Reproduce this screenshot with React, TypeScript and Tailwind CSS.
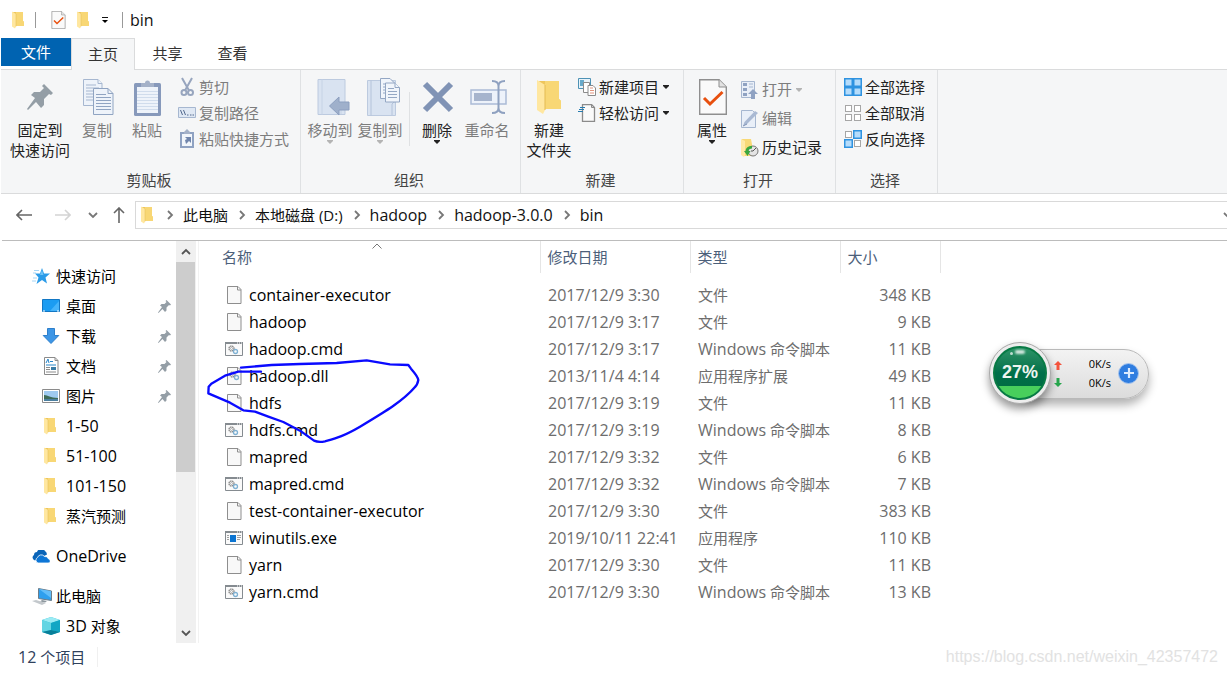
import React from 'react';

type IconProps = { className?: string };

// latin runs are set one pixel larger than the chinese text around them
const Mixed = ({ text }: { text: string }) => (
	<>
		{text.split(/([\x21-\x7e]+)/).map((part, i) =>
			i % 2 ? (
				<span key={i} className="text-base leading-5">
					{part}
				</span>
			) : (
				part
			)
		)}
	</>
);

const Folder = ({ className = 'w-3 h-[18px]' }: IconProps) => (
	<svg viewBox="0 0 24 36" className={`shrink-0 ${className}`}>
		<path d="M2 2h20v18l2 2v8H6z" fill="#eec65c" />
		<path d="M8 2h14v18l2 2v8H8z" fill="#f8d775" />
		<path d="M0 1l8 5v25l-2 4-6-4z" fill="#ffe7a0" />
		<path d="M8 6v25" stroke="#e3bb52" strokeWidth="1" />
	</svg>
);

const Pin = ({ className = 'w-3 h-3' }: IconProps) => (
	<svg viewBox="0 0 26 26" className={`shrink-0 ${className}`} fill="#949ea6">
		<path d="M17 0l9 9-2 2-2-1-5 5v6l-3 3-5-6L1 26l-1-1L8 14 4 11l3-3h6l4-4-2-2z" />
	</svg>
);

const CheckPage = ({ className = 'w-4 h-5' }: IconProps) => (
	<svg viewBox="0 0 28 36" className={`shrink-0 ${className}`}>
		<path d="M.7.7H20l7.300 7.300v27.300H.7z" fill="#fafafa" stroke="#8f8f8f" strokeWidth="1.400" />
		<path d="M20 .7v7.300h7.300" fill="#e2e2e2" stroke="#8f8f8f" />
		<path d="M5 19l6 6L23.500 13" fill="none" stroke="#e8500f" strokeWidth="3" />
	</svg>
);

const CopyPages = ({ className = 'w-[31px] h-9' }: IconProps) => (
	<svg viewBox="0 0 31 36" className={className} fill="#eef3fa" stroke="#a6b7d0">
		<path d="M.5.5H15l4 4v22H.5z" />
		<path d="M15 .5v4h4M3 6h10M3 9h13M3 12h8M3 15h8M3 18h8M3 21h8" />
		<path d="M10.500 9.500H25l5 5v21H10.500z" stroke="#90a4c2" />
		<path d="M25 9.500v5h5M13 15.500h10M13 18.500h15M13 21.500h15M13 24.500h15M13 27.500h15M13 30.500h15" fill="none" stroke="#90a4c2" />
	</svg>
);

const Clipboard = () => (
	<svg viewBox="0 0 27 37" className="w-[27px] h-[37px]">
		<rect y="4" width="27" height="33" rx="1.500" fill="#8799bb" />
		<path d="M3 8h21v26H3z" fill="#eef3fa" />
		<path d="M3 12.500h21M3 15.500h21M3 18.500h21M3 21.500h21M3 24.500h21M3 27.500h21M3 30.500h21" stroke="#d0dcec" />
		<path d="M7 8V4h4a2.500 2.500 0 015 0h4v4z" fill="#a4b1c8" />
	</svg>
);

const Scissors = () => (
	<svg viewBox="0 0 18 20" className="w-[18px] h-5" fill="none" stroke="#97a5be" strokeWidth="2">
		<path d="M4 1l7 12.500M14 1L7 13.500" />
		<circle cx="6" cy="15.500" r="2.500" />
		<circle cx="12.500" cy="15.500" r="2.500" />
	</svg>
);

const PathBox = () => (
	<svg viewBox="0 0 18 12" className="w-[18px] h-3">
		<path d="M.5.5h17v10H.5z" fill="#dfe8f4" stroke="#a6b7d0" />
		<path d="M2.500 3l2 5M5.500 3l2 5" stroke="#52688d" />
		<path d="M9 8h1.500M12 8h1.500M14.500 8h1.500" stroke="#52688d" />
	</svg>
);

const PasteLink = () => (
	<svg viewBox="0 0 18 20" className="w-[18px] h-5">
		<path d="M2 3h14v16H2z" fill="#8fa2c2" />
		<path d="M4 5h10v12H4z" fill="#f2f6fb" />
		<path d="M6 5V3l3-3 3 3v2z" fill="#a4b1c8" />
		<path d="M7 8h6v6l-2-2-3 3-1-4 2-1z" fill="#7186ac" />
	</svg>
);

const MoveTo = () => (
	<svg viewBox="0 0 33 37" className="w-[33px] h-[37px] ml-1.5">
		<path d="M1 .5h27v35H1z" fill="#d9e3f1" stroke="#bccadf" />
		<path d="M5 .5v35M24 23v12" stroke="#c6d3e5" />
		<path d="M12.500 27L22 18v5h10v8H22v5z" fill="#9fb0cb" stroke="#8c9fbf" />
	</svg>
);

const CopyTo = () => (
	<svg viewBox="0 0 33 38" className="w-[33px] h-[38px] ml-1.5">
		<path d="M.5 2.500h28v35H.5z" fill="#d9e3f1" stroke="#bccadf" />
		<path d="M4 2.500v35M25 37V26l2-2h2" stroke="#b4c3da" fill="none" />
		<g fill="#f1f5fb" stroke="#94a7c4">
			<path d="M13.500.5H23l4 4v16H13.500z" />
			<path d="M16 6h4M16 9h4M16 12h4M16 15h4" />
			<path d="M18.500 5H28l4.500 4.500V24h-14z" />
			<path d="M28 5v4.500h4.500M21 10.500h6M21 13.500h9M21 16.500h9M21 19.500h9" />
		</g>
	</svg>
);

const DeleteX = () => (
	<svg viewBox="0 0 32 32" className="w-8 h-8 ml-0.5" stroke="#8093b5" strokeWidth="6">
		<path d="M3 3l26 26M29 3L3 29" />
	</svg>
);

const Rename = () => (
	<svg viewBox="0 0 37 34" className="w-[37px] h-[34px] ml-0.5" fill="none">
		<path d="M1 10h35v14H1z" fill="#edf2fa" stroke="#aabbd6" strokeWidth="1.500" />
		<path d="M4 13h18v8H4z" fill="#a6b4cd" />
		<path d="M22 1c5 0 6.500 2 6.500 5v22c0 3-1.500 5-6.500 5M35 1c-5 0-6.500 2-6.500 5v22c0 3 1.500 5 6.500 5" stroke="#8fa1c0" strokeWidth="2" />
	</svg>
);

const NewItem = () => (
	<svg viewBox="0 0 18 18" className="w-[18px] h-[18px]">
		<path d="M.5.5h12v10H.5z" fill="#e8f3fa" stroke="#4d92b5" />
		<path d="M2 2h4v6H2z" fill="#67aacb" />
		<path d="M5.500 4.500h6v10h-6z" fill="#fff" stroke="#8b8b8b" />
		<path d="M10 7.500h5l2.500 2.500v7.500H10z" fill="#fff" stroke="#8b8b8b" />
		<path d="M12 10h3M12 12.500h4M12 15h4" stroke="#e2957e" />
	</svg>
);

const EasyAccess = () => (
	<svg viewBox="0 0 18 18" className="w-[18px] h-[18px]">
		<path d="M4.500.5h9l3 3v14h-12z" fill="#fafafa" stroke="#8b8b8b" strokeWidth="1.300" />
		<path d="M13.500.5v3h3" fill="none" stroke="#8b8b8b" />
		<path d="M2 3.500h5M1 5.500h5M0 7.500h5" stroke="#287cb0" />
	</svg>
);

const OpenItem = () => (
	<svg viewBox="0 0 18 20" className="w-[18px] h-5">
		<path d="M.5 1.500h13v16H.5z" fill="#e9eff8" stroke="#a6b7d0" />
		<path d="M2 3h4v3H2zM2 8h4v3H2zM2 13h4v3H2z" fill="#8fa2c2" />
		<path d="M8 4h4M8 7h4" stroke="#a6b7d0" />
		<path d="M12 9l5 5h-3v5h-4v-5H7z" fill="#8fa2c2" />
	</svg>
);

const EditPage = () => (
	<svg viewBox="0 0 18 20" className="w-[18px] h-5">
		<path d="M.5 1.500h11l3 3v14H.5z" fill="#e9eff8" stroke="#a6b7d0" />
		<path d="M2 17l1.500-4L14 2l3 2L6 15z" fill="#a9b9d3" />
		<path d="M2 17l4-2" stroke="#8093b5" />
	</svg>
);

const History = () => (
	<svg viewBox="0 0 18 20" className="w-[18px] h-5">
		<path d="M1 1h9l2 11v6H2z" fill="#f8d977" />
		<path d="M0 1l4 2v14l-1 2-3-2z" fill="#ffe9a6" />
		<circle cx="12" cy="13" r="5" fill="#e4e4e4" stroke="#777" />
		<path d="M12 13l3-3M12 13h-2" stroke="#555" />
		<path d="M11 8c-4 0-6 1.500-6.500 5H3l3.500 5 3-5H7.500c0-1.500 1.500-2.500 3.500-2.500z" fill="#3aa63f" />
	</svg>
);

const Grid = ({ kind }: { kind: 'all' | 'none' | 'invert' }) => {
	const on = { all: [0, 1, 2, 3], none: [], invert: [1, 2] }[kind] as number[];
	return (
		<svg viewBox="0 0 18 18" className="w-[18px] h-[18px]">
			{[0, 1, 2, 3].map((i) => {
				const active = on.includes(i);
				const size = active ? 7.500 : 6;
				return (
					<rect
						key={i}
						x={(i % 2) * 9 + (active ? 0.75 : 1.500)}
						y={Math.floor(i / 2) * 9 + (active ? 0.75 : 1.500)}
						width={size}
						height={size}
						fill={active ? '#b5dcfb' : '#fff'}
						stroke={active ? '#2f93e0' : '#a6a6a6'}
						strokeWidth={active ? 1.500 : 1}
					/>
				);
			})}
		</svg>
	);
};

const Caret = ({ muted = false }) => (
	<svg viewBox="0 0 6 4" className={`w-1.5 h-1 ${muted ? 'fill-[#b4b4b4]' : 'fill-[#222]'}`}>
		<path d="M0 0h6v1L3 4 0 1z" />
	</svg>
);

const Chevron = ({ className = '' }: IconProps) => (
	<svg viewBox="0 0 10 10" className={`w-2.5 h-2.5 shrink-0 ${className}`} fill="none" stroke="currentColor" strokeWidth="1.800">
		<path d="M3 1l4 4-4 4" />
	</svg>
);

const Arrow = ({ className = '' }: IconProps) => (
	<svg viewBox="0 0 16 14" className={`w-4 h-3.5 shrink-0 ${className}`} fill="none" stroke="currentColor" strokeWidth="1.600">
		<path d="M1 7h15M6 2L1 7l5 5" />
	</svg>
);

const Star = () => (
	<svg viewBox="0 0 18 16" className="w-[18px] h-4">
		<path d="M10 0l2 5.500h6l-4.500 4 1.500 6-5-3.500-5.500 4 2-6.500L3 5.500h5z" fill="#2a9be8" />
		<path d="M10 2l1.500 5H8z" fill="#6cc2f7" />
		<path d="M2 2.500h5M1 5h3M1 10h4M0 13h4" stroke="#8fcaf2" strokeWidth=".8" />
	</svg>
);

const Desktop = () => (
	<svg viewBox="0 0 18 14" className="w-[18px] h-3.5">
		<path d="M.5.5h17v12H.5z" fill="#1b9cf2" stroke="#1277c4" />
		<path d="M8 12L17 2v10z" fill="#45b4fb" />
		<path d="M1 12h2M15 12h2" stroke="#fff" />
	</svg>
);

const Download = () => (
	<svg viewBox="0 0 18 16" className="w-[18px] h-4">
		<path d="M5.500.5h7v7h4.300L9 15.500 1.200 7.500h4.300z" fill="#3d96e6" stroke="#2d7fcb" />
	</svg>
);

const Documents = () => (
	<svg viewBox="0 0 18 18" className="w-[18px] h-[18px]">
		<path d="M2.500.5H13l3 3v14H2.500z" fill="#fff" stroke="#8b8b8b" />
		<path d="M13 .5v3h3" fill="none" stroke="#8b8b8b" />
		<path d="M4 6l2-4 1 4M8 4.500h3M4 8h10" stroke="#2786c9" fill="none" />
		<path d="M4 10.500h4M4 12.500h4M4 15h10" stroke="#8b8b8b" />
		<path d="M9 10h5v3H9z" fill="#3a7ca6" />
	</svg>
);

const Pictures = () => (
	<svg viewBox="0 0 18 14" className="w-[18px] h-3.5">
		<path d="M.5.5h17v13H.5z" fill="#fff" stroke="#8b8b8b" />
		<path d="M2 2h14v10H2z" fill="#9fcaf0" />
		<path d="M2 6c4 0 6 3 14 3v1H2z" fill="#3e6b58" />
		<path d="M2 10h14v2H2z" fill="#4b7fa0" />
	</svg>
);

const Cloud = () => (
	<svg viewBox="0 0 18 13" className="w-[18px] h-[13px]">
		<path d="M3 10.500a3 3 0 01-1-5.500 3 3 0 013-3 4.500 4.500 0 018-1 4.500 4.500 0 012 3.500z" fill="#0a64b8" />
		<path d="M6 13a3 3 0 01-.5-5.500 4 4 0 017-1 3.500 3.500 0 014 2.500 2 2 0 01-.5 4z" fill="#0d76d6" stroke="#fff" strokeWidth=".8" />
	</svg>
);

const Computer = () => (
	<svg viewBox="0 0 20 17" className="w-5 h-[17px]">
		<path d="M6.500.5l13 2.500v9.500l-13-2z" fill="#2e9fee" stroke="#6c7c88" />
		<path d="M7 1l12 9V3z" fill="#62bdf9" />
		<path d="M10 12l5 1-2 1.500-5-1z" fill="#8d979e" />
		<path d="M0 13l4-1 10 3-4 2z" fill="#c3c8cc" />
	</svg>
);

const Cube = () => (
	<svg viewBox="0 0 18 18" className="w-[18px] h-[18px]">
		<path d="M9 0l9 3v12l-9 3-9-3V3z" fill="#2cc0d6" />
		<path d="M9 0l9 3-9 3-9-3z" fill="#9cebf4" />
		<path d="M0 3l9 3v7l-9 2z" fill="#63d5e3" />
		<path d="M9 6l9-3v12l-9-2z" fill="#13a6c4" />
		<path d="M0 15l9-2 9 2-9 3z" fill="#087f99" />
	</svg>
);

const Gears = () => (
	<g fill="none">
		<circle cx="7.500" cy="7.500" r="2.500" stroke="#8b8b8b" strokeWidth="1.300" strokeDasharray="1.500 .5" />
		<circle cx="7.500" cy="7.500" r="1" stroke="#999" strokeWidth=".7" />
		<circle cx="11.500" cy="10.500" r="2" stroke="#7fb1d3" strokeWidth="1.300" />
	</g>
);

const FilePage = ({ gears = false }) => (
	<svg viewBox="0 0 18 18" className="w-[18px] h-[18px]">
		<path d="M2.500.5H13l3 3v14H2.500z" fill="#f8f8f8" stroke="#8e8e8e" />
		<path d="M12.500.5v3.500H16" fill="none" stroke="#8e8e8e" />
		{gears && <Gears />}
	</svg>
);

const AppWindow = ({ exe = false }) => (
	<svg viewBox="0 0 18 14" className="w-[18px] h-3.5">
		<path d="M.5.5h17v13H.5z" fill="#fafafa" stroke="#858b90" />
		<path d="M0 1h18" stroke="#858b90" strokeWidth="2" />
		<path d="M12 1h1M14 1h1M16 1h1" stroke="#fff" />
		{exe ? (
			<>
				<path d="M5 4h6v7H5z" fill="#0b74d1" />
				<path d="M2 4.500h2M2 6.500h2M2 8.500h2M12 4.500h4M12 6.500h4M12 8.500h3" stroke="#a0a0a0" />
			</>
		) : (
			<g transform="translate(-1 -1)">
				<Gears />
			</g>
		)}
	</svg>
);

type BigButtonProps = {
	icon: React.ReactNode;
	lines: string[];
	width?: string;
	muted?: boolean;
	caret?: boolean;
};

const BigButton = ({ icon, lines, width = 'w-[50px]', muted = false, caret = false }: BigButtonProps) => (
	<button type="button" className={`${width} flex flex-col items-center ${muted ? 'text-[#7d7d7d]' : 'text-[#222]'}`}>
		<span className="h-[50px] pt-1 flex items-center">{icon}</span>
		{lines.map((line) => (
			<span key={line} className="leading-5 whitespace-nowrap">
				{line}
			</span>
		))}
		{caret && <Caret muted={muted} />}
	</button>
);

type SmallButtonProps = {
	icon: React.ReactNode;
	label: string;
	muted?: boolean;
	caret?: boolean;
	tall?: boolean;
};

const SmallButton = ({ icon, label, muted = false, caret = false, tall = false }: SmallButtonProps) => (
	<button
		type="button"
		className={`${tall ? 'h-[29px]' : 'h-[26px]'} flex items-center whitespace-nowrap ${muted ? 'text-[#7d7d7d]' : 'text-[#222]'}`}
	>
		<span className="w-[21px] flex">{icon}</span>
		<span className="pr-1">{label}</span>
		{caret && <Caret muted={muted} />}
	</button>
);

type GroupProps = { label: string; width: string; indent?: string; children: React.ReactNode };

const Group = ({ label, width, indent = 'pl-[3px]', children }: GroupProps) => (
	<section aria-label={label} className={`flex flex-col border-r border-[#dfe1e3] ${width}`}>
		<div className={`flex h-[100px] ${indent}`}>{children}</div>
		<div className="pr-[3px] text-center leading-5 text-[#444]">{label}</div>
	</section>
);

const Column = ({ className = 'pt-1 pl-1.5', children }: { className?: string; children: React.ReactNode }) => (
	<div className={`flex flex-col ${className}`}>{children}</div>
);

const Ribbon = () => (
	<div className="flex h-[125px] bg-[#f5f6f7] border-y border-[#dadbdc] ml-px">
		<Group label="剪贴板" width="w-[300px]" indent="pl-[7px]">
			<BigButton icon={<Pin className="w-[26px] h-[26px]" />} lines={['固定到', '快速访问']} width="w-[64px]" />
			<BigButton icon={<CopyPages className="w-[31px] h-9 ml-0.5" />} lines={['复制']} muted />
			<BigButton icon={<Clipboard />} lines={['粘贴']} muted />
			<Column>
				<SmallButton icon={<Scissors />} label="剪切" muted />
				<SmallButton icon={<PathBox />} label="复制路径" muted />
				<SmallButton icon={<PasteLink />} label="粘贴快捷方式" muted />
			</Column>
		</Group>
		<Group label="组织" width="w-[220px]" indent="pl-1">
			<BigButton icon={<MoveTo />} lines={['移动到']} muted caret />
			<BigButton icon={<CopyTo />} lines={['复制到']} muted caret />
			<div className="w-px h-[54px] mt-[22px] ml-1 mr-0.5 bg-[#dfe1e3]" />
			<BigButton icon={<DeleteX />} lines={['删除']} caret />
			<BigButton icon={<Rename />} lines={['重命名']} muted />
		</Group>
		<Group label="新建" width="w-[163px]">
			<BigButton icon={<Folder className="w-6 h-9" />} lines={['新建', '文件夹']} />
			<Column className="pt-1 pl-1">
				<SmallButton icon={<NewItem />} label="新建项目" caret />
				<SmallButton icon={<EasyAccess />} label="轻松访问" caret />
			</Column>
		</Group>
		<Group label="打开" width="w-[152px]">
			<BigButton icon={<CheckPage className="w-7 h-9 ml-0.5" />} lines={['属性']} caret />
			<Column className="pt-[5px] pl-1">
				<SmallButton icon={<OpenItem />} label="打开" muted caret tall />
				<SmallButton icon={<EditPage />} label="编辑" muted tall />
				<SmallButton icon={<History />} label="历史记录" tall />
			</Column>
		</Group>
		<Group label="选择" width="w-[102px]" indent="pl-0.5">
			<Column>
				<SmallButton icon={<Grid kind="all" />} label="全部选择" />
				<SmallButton icon={<Grid kind="none" />} label="全部取消" />
				<SmallButton icon={<Grid kind="invert" />} label="反向选择" />
			</Column>
		</Group>
	</div>
);

const crumbs = ['此电脑', '本地磁盘 (D:)', 'hadoop', 'hadoop-3.0.0', 'bin'];

const AddressBar = () => (
	<nav aria-label="地址" className="h-[46px] flex items-center pl-4 pb-[5px] text-[#111]">
		<button type="button" aria-label="后退" className="mr-[23px] text-[#666]">
			<Arrow />
		</button>
		<button type="button" aria-label="前进" className="mr-[17px] text-[#d4d4d4]">
			<Arrow className="rotate-180" />
		</button>
		<button type="button" aria-label="最近" className="mr-[13px] text-[#777]">
			<Chevron className="rotate-90" />
		</button>
		<button type="button" aria-label="向上" className="mr-2 text-[#666]">
			<Arrow className="rotate-90" />
		</button>
		<div className="flex-1 min-w-0 h-7 flex items-center border border-r-0 border-[#d9d9d9] pl-[5px] overflow-hidden">
			<Folder className="w-3 h-[18px] mr-[3px]" />
			{crumbs.map((crumb) => (
				<span key={crumb} className="flex items-center whitespace-nowrap">
					<Chevron className="ml-[9px] mr-2 text-[#777]" />
					<button type="button" className={/^[a-z]/.test(crumb) ? 'text-base leading-5' : 'leading-5'}>
						{crumb}
					</button>
				</span>
			))}
			<button type="button" aria-label="展开" className="ml-auto -mr-1.5 text-[#777]">
				<Chevron className="rotate-90" />
			</button>
		</div>
	</nav>
);

const SmallFolder = () => <Folder className="w-3 h-[18px] ml-0.5" />;

const places = [
	{ label: '桌面', icon: <Desktop />, pinned: true },
	{ label: '下载', icon: <Download />, pinned: true },
	{ label: '文档', icon: <Documents />, pinned: true },
	{ label: '图片', icon: <Pictures />, pinned: true },
	{ label: '1-50', icon: <SmallFolder /> },
	{ label: '51-100', icon: <SmallFolder /> },
	{ label: '101-150', icon: <SmallFolder /> },
	{ label: '蒸汽预测', icon: <SmallFolder /> },
];

type PlaceProps = { icon: React.ReactNode; label: string; pinned?: boolean; root?: boolean };

const Place = ({ icon, label, pinned = false, root = false }: PlaceProps) => (
	<a href="#" className={`h-[30px] flex items-center pr-[5px] ${root ? 'pl-8' : 'pl-[42px]'}`}>
		<span className="w-6 flex shrink-0">{icon}</span>
		<span className="flex-1 whitespace-nowrap leading-5">
			<Mixed text={label} />
		</span>
		{pinned && <Pin className="w-[13px] h-[13px]" />}
	</a>
);

const Sidebar = () => (
	<aside className="w-[199px] shrink-0 flex border-r border-[#f2f2f2]">
		<nav aria-label="导航" className="w-[176px] pt-5 text-black">
			<Place root icon={<Star />} label="快速访问" />
			{places.map((place) => (
				<Place key={place.label} {...place} />
			))}
			<div className="py-2.5">
				<Place root icon={<Cloud />} label="OneDrive" />
			</div>
			<Place root icon={<Computer />} label="此电脑" />
			<Place icon={<Cube />} label="3D 对象" />
		</nav>
		<div className="w-5 pr-px bg-[#f0f0f0] flex flex-col items-center text-[#555]">
			<button type="button" aria-label="向上滚动" className="h-[21px] flex items-center">
				<Chevron className="-rotate-90" />
			</button>
			<div className="w-full h-[210px] bg-[#cdcdcd]" />
			<button type="button" aria-label="向下滚动" className="h-[21px] mt-auto flex items-center">
				<Chevron className="rotate-90" />
			</button>
		</div>
	</aside>
);

const files = [
	{ name: 'container-executor', date: '2017/12/9 3:30', type: '文件', size: '348 KB' },
	{ name: 'hadoop', date: '2017/12/9 3:17', type: '文件', size: '9 KB' },
	{ name: 'hadoop.cmd', date: '2017/12/9 3:17', type: 'Windows 命令脚本', size: '11 KB' },
	{ name: 'hadoop.dll', date: '2013/11/4 4:14', type: '应用程序扩展', size: '49 KB' },
	{ name: 'hdfs', date: '2017/12/9 3:19', type: '文件', size: '11 KB' },
	{ name: 'hdfs.cmd', date: '2017/12/9 3:19', type: 'Windows 命令脚本', size: '8 KB' },
	{ name: 'mapred', date: '2017/12/9 3:32', type: '文件', size: '6 KB' },
	{ name: 'mapred.cmd', date: '2017/12/9 3:32', type: 'Windows 命令脚本', size: '7 KB' },
	{ name: 'test-container-executor', date: '2017/12/9 3:30', type: '文件', size: '383 KB' },
	{ name: 'winutils.exe', date: '2019/10/11 22:41', type: '应用程序', size: '110 KB' },
	{ name: 'yarn', date: '2017/12/9 3:30', type: '文件', size: '11 KB' },
	{ name: 'yarn.cmd', date: '2017/12/9 3:30', type: 'Windows 命令脚本', size: '13 KB' },
];

const fileIcon = (name: string) => {
	if (name.endsWith('.cmd')) return <AppWindow />;
	if (name.endsWith('.exe')) return <AppWindow exe />;
	return <FilePage gears={name.endsWith('.dll')} />;
};

const FileTable = () => (
	<table className="table-fixed w-[741px] border-collapse whitespace-nowrap">
		<colgroup>
			<col className="w-[341px]" />
			<col className="w-[150px]" />
			<col className="w-[150px]" />
			<col className="w-[100px]" />
		</colgroup>
		<thead>
			<tr className="h-8 text-left text-[#4c607a]">
				<th className="relative font-normal p-0 pl-[23px] border-r border-[#e5e5e5]">
					名称
					<svg viewBox="0 0 10 6" className="absolute left-[173px] top-0.5 w-2.5 h-1.5" fill="none" stroke="#777">
						<path d="M.5 5.500L5 1l4.500 4.500" />
					</svg>
				</th>
				<th className="font-normal p-0 pl-[7px] border-r border-[#e5e5e5]">修改日期</th>
				<th className="font-normal p-0 pl-[7px] border-r border-[#e5e5e5]">类型</th>
				<th className="font-normal p-0 pl-[7px] border-r border-[#e5e5e5]">大小</th>
			</tr>
		</thead>
		<tbody className="text-[#6d6d6d] before:block before:h-2">
			{files.map((file) => (
				<tr key={file.name} className="h-[27px]">
					<td className="p-0 pl-[26px]">
						<div className="flex items-center gap-1.5 text-base leading-5 text-black">
							{fileIcon(file.name)}
							{file.name}
						</div>
					</td>
					<td className="p-0 pl-2 text-base leading-5">{file.date}</td>
					<td className="p-0 pl-2 leading-5">
						<Mixed text={file.type} />
					</td>
					<td className="p-0 pr-[9px] text-right text-base leading-5">{file.size}</td>
				</tr>
			))}
		</tbody>
	</table>
);

// freehand loop drawn around hadoop.dll
const Scribble = () => (
	<svg viewBox="15 351 660 270" className="absolute left-1.5 top-[116px] w-[220px] h-[90px] pointer-events-none" fill="none" stroke="#0a0aff" strokeWidth="7" strokeLinecap="round" strokeLinejoin="round">
		<path d="M123 383L215 375 300 372 410 369 500 361 570 373 625 375 633 386Q654 410 655 420 652 435 645 441C610 482 560 512 480 560 430 589 410 594 375 604Q355 608 342 602L300 572 250 546 205 530 165 515 130 511 90 488 25 460 26 440 34 431 75 407 115 395 183 395" />
	</svg>
);

const SpeedWidget = () => (
	<div className="absolute right-[78px] top-[101px] w-[160px] h-[62px] flex items-center font-['Liberation_Sans',sans-serif]">
		<div className="absolute left-6 right-0 top-[7px] h-[50px] rounded-full border border-[#b9b9b9] bg-linear-to-b from-[#f3f3f3] to-[#dcdcdc] shadow-[0_6px_10px_rgba(0,0,0,0.3)]" />
		<div className="relative w-[62px] h-[62px] rounded-full border border-[#a9a9a9] bg-[#ededed] p-[3px] shadow-[0_5px_9px_rgba(0,0,0,0.4)]">
			<div className="h-full rounded-full overflow-hidden border-2 border-[#087a45] bg-linear-to-b from-[#2b9467] via-[#00704a] to-[#006b3e] flex flex-col">
				<span className="h-[38px] pt-2.5 flex items-center justify-center text-lg leading-5 font-bold text-[#eef5f0]">27%</span>
				<span className="flex-1 bg-[#48cf5c]" />
			</div>
			<span className="absolute left-[25px] top-[7px] w-2.5 h-1 rounded-full bg-white/80 blur-[1px]" />
			<span className="absolute left-5 top-[9px] w-[3px] h-[3px] rounded-full bg-white/70" />
		</div>
		<div className="relative flex flex-col gap-2 pl-[3px] pt-px">
			<svg viewBox="0 0 8 9" className="w-2 h-[9px]" fill="#f4533c">
				<path d="M4 0l4 4H5.500v5h-3V4H0z" />
			</svg>
			<svg viewBox="0 0 8 9" className="w-2 h-[9px]" fill="#27a54c">
				<path d="M4 9L0 5h2.500V0h3v5H8z" />
			</svg>
		</div>
		<div className="relative w-[49px] flex flex-col text-right font-['Open_Sans',sans-serif] text-[11px] leading-[19px] text-black">
			<span>0K/s</span>
			<span>0K/s</span>
		</div>
		<button type="button" aria-label="加速" className="relative ml-[7px] w-[21px] h-[21px] rounded-full bg-[#2f7de0] border border-[#a9c6ee] flex items-center justify-center">
			<svg viewBox="0 0 10 10" className="w-2.5 h-2.5" stroke="#dcebff" strokeWidth="2.200">
				<path d="M5 0v10M0 5h10" />
			</svg>
		</button>
	</div>
);

export default function App() {
	return (
		<div className="relative min-h-screen flex flex-col overflow-hidden bg-white text-[15px] font-['Open_Sans','Noto_Sans_CJK_SC',sans-serif]">
			<header className="h-[38px] flex items-center pt-px pl-3 text-[#111]">
				<Folder />
				<span className="w-px h-4 ml-[11px] mr-[15px] bg-[#999]" />
				<button type="button" aria-label="属性">
					<CheckPage className="w-[15px] h-[18px]" />
				</button>
				<button type="button" aria-label="新建文件夹" className="ml-[11px]">
					<Folder />
				</button>
				<button type="button" aria-label="自定义快速访问工具栏" className="ml-3 mr-[13px]">
					<svg viewBox="0 0 8 8" className="w-2 h-2">
						<path d="M1 1.500h6" stroke="#111" />
						<path d="M1 4h6L4 7z" />
					</svg>
				</button>
				<span className="w-px h-4 mr-[7px] bg-[#999]" />
				<h1 className="text-base leading-5">bin</h1>
			</header>
			<div className="relative z-10 flex h-[31px] pl-px text-[#333]">
				<button type="button" className="w-[70px] h-7 bg-[#0063b1] text-white">
					文件
				</button>
				<button type="button" className="w-[64px] h-8 bg-[#f5f6f7] border border-b-0 border-[#dadbdc]">
					主页
				</button>
				<button type="button" className="w-[65px]">
					共享
				</button>
				<button type="button" className="w-[65px]">
					查看
				</button>
			</div>
			<Ribbon />
			<AddressBar />
			<main className="relative flex flex-1 border-t border-[#bcbcbc] ml-0.5">
				<div className="flex flex-1 -ml-0.5">
					<Sidebar />
					<div className="relative flex-1">
						<FileTable />
						<Scribble />
					</div>
				</div>
				<SpeedWidget />
			</main>
			<footer className="h-[31px] flex items-center justify-between pl-[18px] pr-[9px] pb-[3px]">
				<span className="pr-3 text-[#2f415c] leading-5 border-r border-[#f0f0f0]">
					<Mixed text="12 个项目" />
				</span>
				<span className="font-['Liberation_Sans',sans-serif] text-base leading-5 text-[#e2e2e2]">
					https://blog.csdn.net/weixin_42357472
				</span>
			</footer>
		</div>
	);
}
